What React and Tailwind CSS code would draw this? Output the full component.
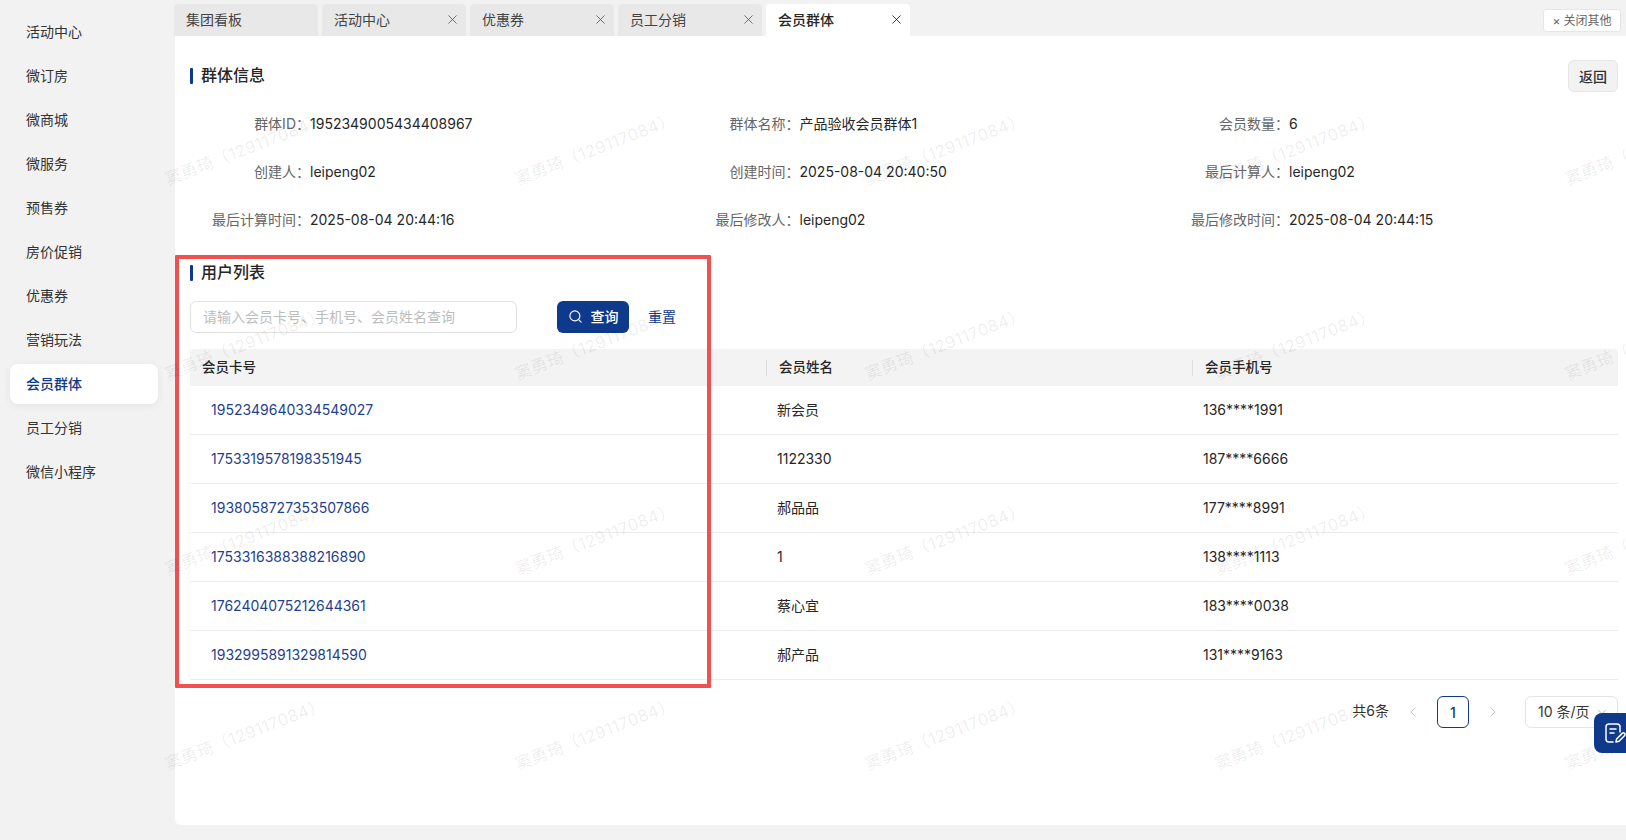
import React from "react";
import { X, Search, ChevronLeft, ChevronRight, ChevronDown } from "lucide-react";

const menu = ["活动中心", "微订房", "微商城", "微服务", "预售券", "房价促销", "优惠券", "营销玩法", "会员群体", "员工分销", "微信小程序"];
const tabs = [
  { t: "集团看板" },
  { t: "活动中心", c: true },
  { t: "优惠券", c: true },
  { t: "员工分销", c: true },
  { t: "会员群体", c: true, a: true },
];
const info = [
  ["群体ID：", "1952349005434408967"],
  ["群体名称：", "产品验收会员群体1"],
  ["会员数量：", "6"],
  ["创建人：", "leipeng02"],
  ["创建时间：", "2025-08-04 20:40:50"],
  ["最后计算人：", "leipeng02"],
  ["最后计算时间：", "2025-08-04 20:44:16"],
  ["最后修改人：", "leipeng02"],
  ["最后修改时间：", "2025-08-04 20:44:15"],
];
const rows = [
  ["1952349640334549027", "新会员", "136****1991"],
  ["1753319578198351945", "1122330", "187****6666"],
  ["1938058727353507866", "郝品品", "177****8991"],
  ["1753316388388216890", "1", "138****1113"],
  ["1762404075212644361", "蔡心宜", "183****0038"],
  ["1932995891329814590", "郝产品", "131****9163"],
];

function Title({ children }) {
  return (
    <div className="flex items-center gap-2 text-[16px] leading-4 font-medium text-[#262626]">
      <span className="w-[3px] h-4 rounded-[1px] bg-[#0f3a8c]" />
      <span className="-translate-y-px">{children}</span>
    </div>
  );
}

export default function App() {
  return (
    <div className="relative flex w-full h-screen overflow-hidden bg-[#f2f2f2] text-[#333] font-['Inter','Noto_Sans_CJK_SC',sans-serif]">
      <aside className="w-[175px] shrink-0 pt-3 pl-[10px] pr-[17px] flex flex-col gap-1">
        {menu.map((m) => (
          <div
            key={m}
            className={
              m === "会员群体"
                ? "h-10 pb-[2px] flex items-center pl-4 text-[14px] font-medium text-[#0f3a8c] bg-white rounded-lg shadow-[0_2px_8px_rgba(0,0,0,0.06)]"
                : "h-10 pb-[2px] flex items-center pl-4 text-[14px] text-[#333]"
            }
          >
            {m}
          </div>
        ))}
      </aside>

      <main className="flex-1 min-w-0 flex flex-col">
        <div className="h-9 shrink-0 pt-1 flex gap-1 relative -ml-px">
          {tabs.map((tab) => (
            <div
              key={tab.t}
              className={
                tab.a
                  ? "w-[144px] h-8 pl-3 pr-[6px] pb-[2px] flex items-center justify-between rounded-t bg-white text-[14px] font-medium text-[#262626]"
                  : "w-[144px] h-8 pl-3 pr-[6px] pb-[2px] flex items-center justify-between rounded-t bg-[#e8e8e8] text-[14px] text-[#444]"
              }
            >
              <span>{tab.t}</span>
              {tab.c && <X size={15} strokeWidth={1.3} className={tab.a ? "text-[#111]" : "text-[#555]"} />}
            </div>
          ))}
          <button className="absolute right-[5px] top-[9px] w-[78px] h-[23px] flex items-center justify-center gap-[3px] bg-white rounded-[3px] border border-[#e6e6e6] text-[12px] text-[#666]">
            <span>×</span>
            <span>关闭其他</span>
          </button>
        </div>

        <div className="flex-1 mb-[15px] bg-white rounded-bl-md pt-6 pl-[15px] pr-2">
          <div className="h-8 flex items-center justify-between">
            <Title>群体信息</Title>
            <button className="w-[50px] h-8 rounded-md bg-[#f2f2f2] border border-[#e6e6e6] text-[14px] font-medium text-[#333]">返回</button>
          </div>

          <div className="mt-[7px] grid grid-cols-[489.5px_489.5px_auto] auto-rows-[48px] items-center">
            {info.map(([k, v]) => (
              <div key={k} className="flex items-center text-[14px]">
                <span className="w-[120px] shrink-0 text-right text-[#666]">{k}</span>
                <span className="text-[#262626]">{v}</span>
              </div>
            ))}
          </div>

          <div className="mt-[22px]">
            <Title>用户列表</Title>
          </div>

          <div className="mt-5 flex items-center h-8">
            <div className="w-[327px] h-8 pb-[2px] flex items-center px-3 rounded-md border border-[#e2e2e2] bg-white text-[14px] text-[#bdbdbd]">
              请输入会员卡号、手机号、会员姓名查询
            </div>
            <button className="ml-[40px] w-[72px] h-8 pb-[2px] flex items-center justify-center gap-2 rounded-md bg-[#0f3a8c] text-white text-[14px] font-medium">
              <Search size={15} strokeWidth={1.8} />
              <span>查询</span>
            </button>
            <button className="ml-[19px] pb-[2px] text-[14px] text-[#0f3a8c]">重置</button>
          </div>

          <div className="mt-4">
            <div className="h-[37px] grid grid-cols-[576px_426px_1fr] items-center rounded-t bg-[#f3f3f3] text-[13.5px] font-medium text-[#262626]">
              <div className="pl-3">会员卡号</div>
              <div className="pl-3 border-l border-[#dedede] h-4 flex items-center">会员姓名</div>
              <div className="pl-3 border-l border-[#dedede] h-4 flex items-center">会员手机号</div>
            </div>
            {rows.map((r) => (
              <div key={r[0]} className="h-[49px] pb-[2px] grid grid-cols-[576px_426px_1fr] items-center border-b border-[#ececec] text-[14px] text-[#262626]">
                <a className="pl-[21px] text-[#1f3f8f]">{r[0]}</a>
                <div className="pl-[11px]">{r[1]}</div>
                <div className="pl-[11px]">{r[2]}</div>
              </div>
            ))}
          </div>

          <div className="mt-4 h-8 flex items-center justify-end text-[14px] text-[#333]">
            <span className="-mt-[3px]">共6条</span>
            <ChevronLeft size={16} strokeWidth={1.3} className="ml-4 text-[#bdbdbd]" />
            <span className="ml-[16px] w-8 h-8 flex items-center justify-center rounded-md border border-[#0f3a8c] font-medium text-[#0f3a8c]">1</span>
            <ChevronRight size={16} strokeWidth={1.3} className="ml-4 text-[#bdbdbd]" />
            <div className="ml-6 w-[93px] h-8 flex items-center justify-between pl-3 pr-2 rounded-md border border-[#e4e4e4]">
              <span className="-translate-y-px">10 条/页</span>
              <ChevronDown size={14} strokeWidth={1.3} className="text-[#aaa]" />
            </div>
          </div>
        </div>
      </main>

      {/* annotation drawn on the screenshot */}
      <div className="absolute left-[175px] top-[255px] w-[536px] h-[433px] border-[4px] border-[#f15050] rounded-[1px] pointer-events-none" />

      {/* watermark */}
      <div className="absolute inset-0 pl-[70px] pt-[52px] grid grid-cols-[repeat(5,350px)] auto-rows-[195px] pointer-events-none overflow-hidden">
        {Array.from({ length: 20 }).map((_, i) => (
          <div key={i} className="flex items-center justify-center">
            <span className="-rotate-[21deg] whitespace-nowrap text-[16.5px] tracking-[0.5px] text-[rgba(0,0,0,0.08)]">窦勇琦（129117084）</span>
          </div>
        ))}
      </div>

      {/* floating feedback button */}
      <button className="absolute right-0 top-[713px] w-8 h-10 flex items-center pl-[10px] rounded-l-lg bg-[#0f3a8c] overflow-hidden">
        <svg width="22" height="22" viewBox="0 0 22 22" fill="none" stroke="#fff" strokeWidth="1.5" strokeLinecap="round" strokeLinejoin="round" className="shrink-0">
          <path d="M9 20H5a3 3 0 0 1-3-3V5a3 3 0 0 1 3-3h8a3 3 0 0 1 3 3v5" />
          <path d="M6 7h6M6 11h4" />
          <path d="M12 20l.6-3 5.6-5.6a1.6 1.6 0 0 1 2.3 2.3L15 19.3z" />
        </svg>
      </button>
    </div>
  );
}
